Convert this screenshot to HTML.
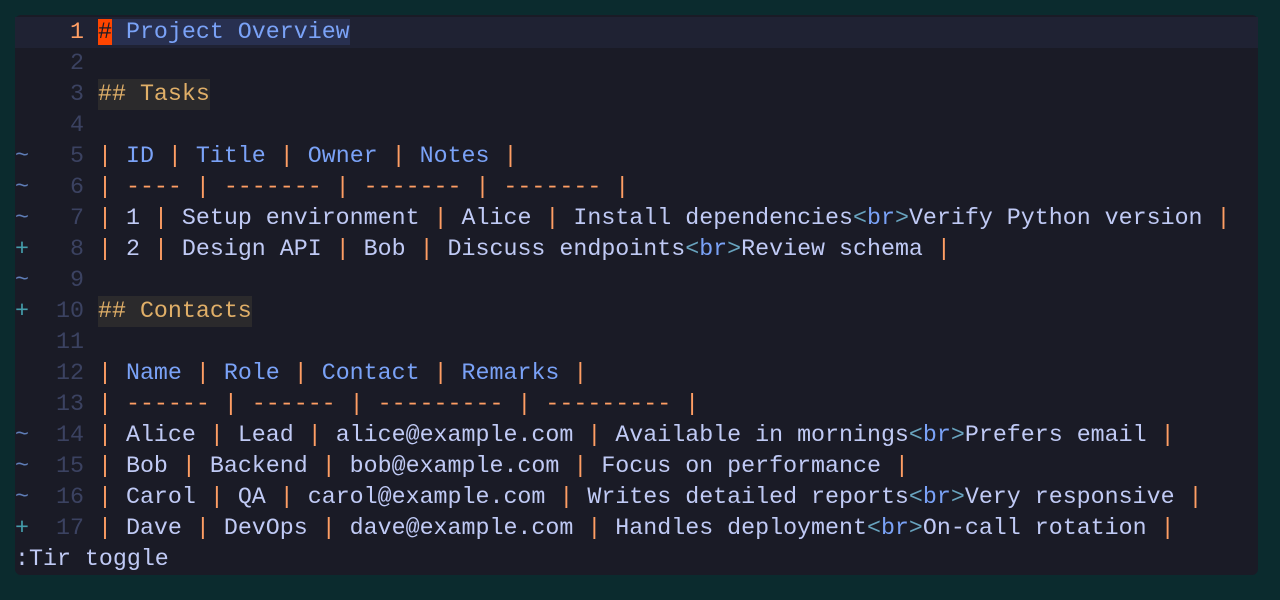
<!DOCTYPE html>
<html><head><meta charset="utf-8"><style>
html,body{margin:0;padding:0;width:1280px;height:600px;background:#0b2b2e;overflow:hidden}
.p{position:absolute;left:15px;top:15px;width:1243px;height:560px;background:#1a1b26;border-radius:6px}
.l{position:absolute;left:0;height:31px;line-height:31px;font-family:"Liberation Mono",monospace;font-size:23.3px;white-space:pre;color:#c0caf5;width:1243px}
.s{position:absolute;left:0;width:14px;text-align:center}
.n{position:absolute;left:0;width:69px;text-align:right;color:#3b4261}
.t{position:absolute;left:83px}
.b{color:#7aa2f7}.o{color:#ff9e64}.y{color:#e0af68}.g{color:#89ddff;opacity:.7}
.tl{color:#5f7eb8}.pl{color:#449dab}
</style></head><body><div class="p">
<div class="l" style="top:2px;background:#1f2233"><span class="n" style="color:#ff9e64"> 1</span><span class="t"><span style="background:#283050;color:#7aa2f7"><span style="background:#ff4500;color:#1a1b26">#</span> Project Overview</span></span></div>
<div class="l" style="top:33px"><span class="n">2</span></div>
<div class="l" style="top:64px"><span class="n">3</span><span class="t y" style="background:#2b2a2c">## Tasks</span></div>
<div class="l" style="top:95px"><span class="n">4</span></div>
<div class="l" style="top:126px"><span class="s tl">~</span><span class="n">5</span><span class="t"><span class="o">|</span> <span class="b">ID</span> <span class="o">|</span> <span class="b">Title</span> <span class="o">|</span> <span class="b">Owner</span> <span class="o">|</span> <span class="b">Notes</span> <span class="o">|</span></span></div>
<div class="l" style="top:157px"><span class="s tl">~</span><span class="n">6</span><span class="t o">| ---- | ------- | ------- | ------- |</span></div>
<div class="l" style="top:188px"><span class="s tl">~</span><span class="n">7</span><span class="t"><span class="o">|</span> 1 <span class="o">|</span> Setup environment <span class="o">|</span> Alice <span class="o">|</span> Install dependencies<span class="g">&lt;</span><span class="b">br</span><span class="g">&gt;</span>Verify Python version <span class="o">|</span></span></div>
<div class="l" style="top:219px"><span class="s pl">+</span><span class="n">8</span><span class="t"><span class="o">|</span> 2 <span class="o">|</span> Design API <span class="o">|</span> Bob <span class="o">|</span> Discuss endpoints<span class="g">&lt;</span><span class="b">br</span><span class="g">&gt;</span>Review schema <span class="o">|</span></span></div>
<div class="l" style="top:250px"><span class="s tl">~</span><span class="n">9</span></div>
<div class="l" style="top:281px"><span class="s pl">+</span><span class="n">10</span><span class="t y" style="background:#2b2a2c">## Contacts</span></div>
<div class="l" style="top:312px"><span class="n">11</span></div>
<div class="l" style="top:343px"><span class="n">12</span><span class="t"><span class="o">|</span> <span class="b">Name</span> <span class="o">|</span> <span class="b">Role</span> <span class="o">|</span> <span class="b">Contact</span> <span class="o">|</span> <span class="b">Remarks</span> <span class="o">|</span></span></div>
<div class="l" style="top:374px"><span class="n">13</span><span class="t o">| ------ | ------ | --------- | --------- |</span></div>
<div class="l" style="top:405px"><span class="s tl">~</span><span class="n">14</span><span class="t"><span class="o">|</span> Alice <span class="o">|</span> Lead <span class="o">|</span> alice@example.com <span class="o">|</span> Available in mornings<span class="g">&lt;</span><span class="b">br</span><span class="g">&gt;</span>Prefers email <span class="o">|</span></span></div>
<div class="l" style="top:436px"><span class="s tl">~</span><span class="n">15</span><span class="t"><span class="o">|</span> Bob <span class="o">|</span> Backend <span class="o">|</span> bob@example.com <span class="o">|</span> Focus on performance <span class="o">|</span></span></div>
<div class="l" style="top:467px"><span class="s tl">~</span><span class="n">16</span><span class="t"><span class="o">|</span> Carol <span class="o">|</span> QA <span class="o">|</span> carol@example.com <span class="o">|</span> Writes detailed reports<span class="g">&lt;</span><span class="b">br</span><span class="g">&gt;</span>Very responsive <span class="o">|</span></span></div>
<div class="l" style="top:498px"><span class="s pl">+</span><span class="n">17</span><span class="t"><span class="o">|</span> Dave <span class="o">|</span> DevOps <span class="o">|</span> dave@example.com <span class="o">|</span> Handles deployment<span class="g">&lt;</span><span class="b">br</span><span class="g">&gt;</span>On-call rotation <span class="o">|</span></span></div>
<div class="l" style="top:529px">:Tir toggle</div>
</div></body></html>
